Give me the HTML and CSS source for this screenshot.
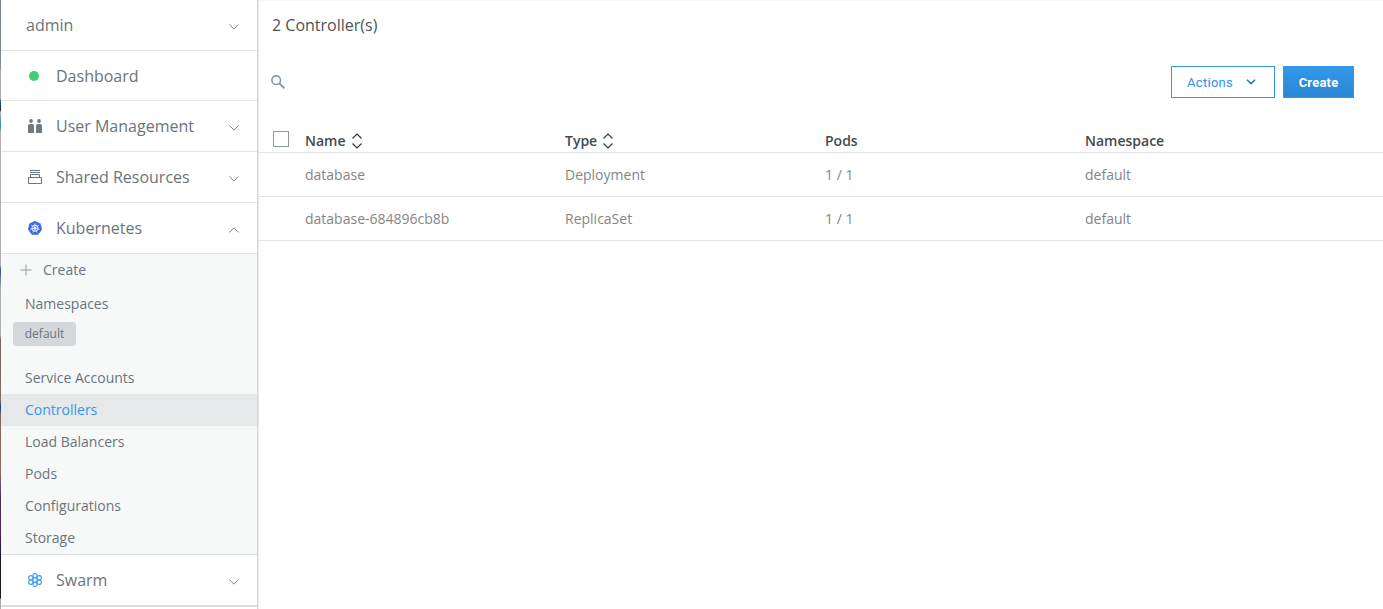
FILE: index.html
```html
<!DOCTYPE html>
<html lang="en">
<head>
<meta charset="utf-8">
<title>Controllers</title>
<link rel="stylesheet" href="styles.css">
</head>
<body>
<div class="app">
  <div class="edge"></div>
  <nav class="sidebar">
    <div class="item account"><span class="label">admin</span><svg class="chevron" viewBox="0 0 10 6"><path d="M.5 .5 5 5.2 9.5 .5"/></svg></div>
    <div class="item dashboard"><span class="icon"><i class="dot"></i></span><span class="label">Dashboard</span></div>
    <div class="item"><span class="icon"><svg width="14" height="14" viewBox="0 0 14 14" fill="#717a80"><circle cx="3" cy="2" r="1.9"/><circle cx="11" cy="2" r="1.9"/><path d="M0 14V7Q0 5 2 5H4Q6 5 6 7V14ZM8 14V7Q8 5 10 5H12Q14 5 14 7V14Z"/></svg></span><span class="label">User Management</span><svg class="chevron" viewBox="0 0 10 6"><path d="M.5 .5 5 5.2 9.5 .5"/></svg></div>
    <div class="item"><span class="icon"><svg width="14" height="14" viewBox="0 0 14 14" fill="none" stroke="#6d767c"><path d="M2 .5H12M2 2.5H12M2.5 7.5V4.5H11.5V7.5M.5 7.5H13.5V13.5H.5Z"/></svg></span><span class="label">Shared Resources</span><svg class="chevron" viewBox="0 0 10 6"><path d="M.5 .5 5 5.2 9.5 .5"/></svg></div>
    <div class="item"><span class="icon"><svg width="14" height="14" viewBox="0 0 14 14"><path d="M7 .3 12.4 2.7 13.7 8.5 10 13.6 4 13.6 .3 8.5 1.6 2.7Z" fill="#3b69e4" stroke="#3b69e4" stroke-width=".6" stroke-linejoin="round"/><g fill="none" stroke="#fff" stroke-width=".8"><circle cx="7" cy="7.2" r="3.1"/><path d="M7 2.4V7.2M10.8 4.2 7 7.2M11.7 8.3 7 7.2M9.1 11.5 7 7.2M4.9 11.5 7 7.2M2.3 8.3 7 7.2M3.2 4.2 7 7.2"/></g></svg></span><span class="label">Kubernetes</span><svg class="chevron" viewBox="0 0 10 6"><path d="M.5 5.5 5 .8 9.5 5.5"/></svg></div>
    <div class="submenu">
      <div class="sub create"><svg width="12" height="12" viewBox="0 0 12 12"><path d="M6 .5V11.5M.5 6H11.5" stroke="#b5b9bb" stroke-width="1.5"/></svg><span>Create</span></div>
      <div class="sub namespaces">Namespaces</div>
      <div class="chip">default</div>
      <div class="sub">Service Accounts</div>
      <div class="sub active">Controllers</div>
      <div class="sub">Load Balancers</div>
      <div class="sub">Pods</div>
      <div class="sub">Configurations</div>
      <div class="sub">Storage</div>
    </div>
    <div class="item swarm"><span class="icon"><svg width="14" height="14" viewBox="0 0 14 14" fill="none" stroke="#3f9eec" stroke-width="1.1"><circle cx="7" cy="7" r="2.2"/><circle cx="7" cy="2.6" r="2.1"/><circle cx="7" cy="11.4" r="2.1"/><circle cx="2.8" cy="4.8" r="2.2"/><circle cx="11.2" cy="4.8" r="2.2"/><circle cx="2.8" cy="9.2" r="2.2"/><circle cx="11.2" cy="9.2" r="2.2"/></svg></span><span class="label">Swarm</span><svg class="chevron" viewBox="0 0 10 6"><path d="M.5 .5 5 5.2 9.5 .5"/></svg></div>
  </nav>
  <main class="content">
    <h1 class="title">2 Controller(s)</h1>
    <div class="toolbar">
      <svg class="search" width="14" height="14" viewBox="0 0 14 14" fill="none" stroke="#8696a0"><circle cx="5.2" cy="5.2" r="4.3" stroke-width="1.6"/><path d="M8.4 8.4 13.3 13.3" stroke-width="2"/></svg>
      <button class="btn outline"><span>Actions</span><svg width="10" height="6" viewBox="0 0 10 6"><path d="M1 .8 5 4.6 9 .8" fill="none" stroke="#2478bd" stroke-width="1.5"/></svg></button>
      <button class="btn primary">Create</button>
    </div>
    <div class="row head">
      <span class="check"><i class="box"></i></span>
      <span class="cell">Name<svg class="sort" viewBox="0 0 10 16"><path d="M.5 5.5 5 1 9.5 5.5M.5 10.5 5 15 9.5 10.5"/></svg></span>
      <span class="cell">Type<svg class="sort" viewBox="0 0 10 16"><path d="M.5 5.5 5 1 9.5 5.5M.5 10.5 5 15 9.5 10.5"/></svg></span>
      <span class="cell">Pods</span>
      <span class="cell">Namespace</span>
    </div>
    <div class="row"><span></span><span class="cell">database</span><span class="cell">Deployment</span><span class="cell">1 / 1</span><span class="cell">default</span></div>
    <div class="row"><span></span><span class="cell">database-684896cb8b</span><span class="cell">ReplicaSet</span><span class="cell">1 / 1</span><span class="cell">default</span></div>
  </main>
</div>
</body>
</html>
```

FILE: styles.css
```css
* { box-sizing: border-box; }
body { margin: 0; background: #fff; font-family: "Open Sans", "Noto Sans", sans-serif; overflow: hidden; }
.app { display: flex; width: 1383px; height: 609px; }
.edge { width: 1px; background: linear-gradient(#76809a 0, #838b9e 68px, #b0a9a9 70px, #aaa 98px, #1d4f86 102px, #222 110px, #b5b0ae 112px, #2f7fd0 126px, #b5b0ae 132px, #b3aeac 265px, #35508c 270px, #b0b0b0 290px, #b0b0b0 335px, #75655f 340px, #7f6f68 400px, #19407f 407px, #7d675c 415px, #8b7064 470px, #46305c 500px, #54275e 530px, #16192b 555px, #16192b 598px, #aaa 599px); }
.sidebar { width: 257px; border-right: 1px solid #d5d7d8; box-shadow: 1px 0 1px #e8e9ea; position: relative; background: #fff; }
.item { display: flex; align-items: center; height: 51px; border-bottom: 1px solid #e2e3e4; padding: 0 18px 0 25px; color: #6b747b; font-size: 16px; }
.item.dashboard { height: 50px; }
.icon { display: flex; width: 30px; padding-left: 2px; }
.dot { width: 10px; height: 10px; margin-left: 1px; border-radius: 50%; background: #3ecf73; }
.chevron { width: 10px; height: 6px; margin: 3px 0 0 auto; fill: none; stroke: #7f868c; stroke-width: 1; }
.submenu { height: 301px; background: #f7f9f9; border-bottom: 1px solid #d9dbdc; font-size: 14px; color: #6b747b; }
.sub { height: 32px; padding-left: 24px; line-height: 32px; }
.create { display: flex; align-items: center; gap: 11px; padding-left: 19px; }
.namespaces { height: 36px; line-height: 36px; }
.chip { width: 63px; height: 24px; margin: 0 0 16px 12px; border-radius: 3px; background: #d5d8db; font-size: 12px; line-height: 24px; text-align: center; }
.active { background: #e6e8e9; color: #3398ea; }
.swarm { border-bottom: 2px solid #dcdedf; height: 52px; }
.content { flex: 1; border-top: 1px solid #f8f8f8; }
.title { margin: 0; padding: 12px 0 0 14px; height: 65px; font-size: 16px; line-height: 24px; font-weight: 400; color: #4d5357; }
.toolbar { display: flex; align-items: center; height: 32px; padding: 0 29px 0 13px; }
.search { margin-right: auto; }
.btn { height: 32px; border: 1px solid #3398ea; font-family: Roboto, sans-serif; font-size: 13px; display: flex; align-items: center; padding: 0; border-radius: 0; }
.outline { width: 104px; padding-left: 15px; gap: 13px; background: #fff; color: #3390e5; margin-right: 8px; letter-spacing: .3px; }
.primary { width: 71px; justify-content: center; color: #fff; font-weight: 700; letter-spacing: .2px; background: linear-gradient(#3498eb, #2a86d2); }
.row { display: grid; grid-template-columns: 47px 260px 260px 260px 1fr; align-items: center; height: 44px; border-bottom: 1px solid #e1e2e3; font-size: 14px; color: #858585; }
.head { height: 55px; align-items: end; font-weight: 600; font-size: 14px; color: #454a4e; }
.head .cell { display: flex; align-items: center; height: 23px; line-height: 23px; }
.check { padding: 0 0 5px 15px; }
.box { display: block; width: 16px; height: 16px; border: 1px solid #8c97a5; }
.sort { width: 10px; height: 16px; margin-left: 6px; fill: none; stroke: #333; stroke-width: 1.1; }
```
